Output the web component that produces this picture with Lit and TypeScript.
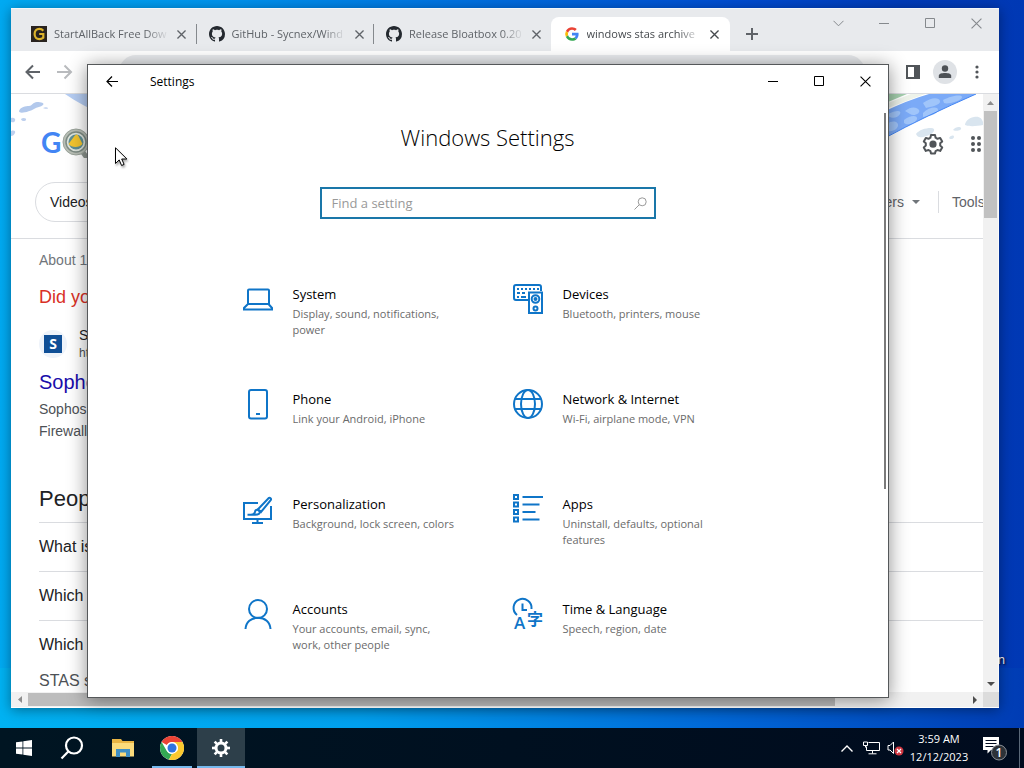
import { LitElement, html, css, svg } from "lit";
import { customElement, property } from "lit/decorators.js";
import { classMap } from "lit/directives/class-map.js";

const cross = (size = 10) => html`<svg width=${size} height=${size} viewBox="0 0 10 10" fill="none" stroke="currentColor"><path d="M0.5 0.5L9.5 9.5M9.5 0.5L0.5 9.5" /></svg>`;
const box = html`<svg width="11" height="11" viewBox="0 0 11 11" fill="none" stroke="currentColor"><path d="M.5 .5h9v9h-9z" /></svg>`;
const dash = html`<svg width="11" height="11" viewBox="0 0 11 11" fill="none" stroke="currentColor"><path d="M0 5.5h10" /></svg>`;

const githubMark = html`<svg width="16" height="16" viewBox="0 0 16 16" fill="#24292f"><path d="M8 0C3.58 0 0 3.58 0 8c0 3.54 2.29 6.53 5.47 7.59.4.07.55-.17.55-.38 0-.19-.01-.82-.01-1.49-2.01.37-2.53-.49-2.69-.94-.09-.23-.48-.94-.82-1.13-.28-.15-.68-.52-.01-.53.63-.01 1.08.58 1.23.82.72 1.21 1.87.87 2.33.66.07-.52.28-.87.51-1.07-1.78-.2-3.64-.89-3.64-3.95 0-.87.31-1.59.82-2.15-.08-.2-.36-1.02.08-2.12 0 0 .67-.21 2.2.82.64-.18 1.32-.27 2-.27s1.36.09 2 .27c1.53-1.04 2.2-.82 2.2-.82.44 1.1.16 1.92.08 2.12.51.56.82 1.27.82 2.15 0 3.07-1.87 3.75-3.65 3.95.29.25.54.73.54 1.48 0 1.07-.01 1.93-.01 2.2 0 .21.15.46.55.38A8.01 8.01 0 0 0 16 8c0-4.42-3.58-8-8-8z" /></svg>`;
const googleMark = html`<svg width="16" height="16" viewBox="0 0 48 48"><path fill="#ea4335" d="M24 11.5c3.3 0 6.200 1.200 8.500 3.300l5.700-5.700C34.500 5.700 29.700 3.500 24 3.500 16 3.500 9.100 8.100 5.700 14.800l6.700 5.200c1.600-4.900 6.200-8.500 11.600-8.500z" /><path fill="#4285f4" d="M43.800 24.500c0-1.400-.1-2.700-.4-4H24v7.800h11.100c-.5 2.600-2 4.700-4.100 6.100l6.500 5c3.900-3.600 6.300-8.900 6.300-14.900z" /><path fill="#fbbc05" d="M12.400 28.100a12.500 12.500 0 0 1 0-8.100l-6.700-5.200a20.500 20.500 0 0 0 0 18.500z" /><path fill="#34a853" d="M24 44.500c5.500 0 10.200-1.800 13.600-5l-6.500-5c-1.900 1.200-4.300 2-7.100 2-5.400 0-10-3.600-11.600-8.500l-6.700 5.200C9.100 39.900 16 44.500 24 44.500z" /></svg>`;
const startMark = html`<svg width="16" height="16" viewBox="0 0 16 16"><rect width="16" height="16" fill="#29231f" /><path d="M12.300 4.700C11.300 3.500 9.900 2.900 8.300 2.900 5.500 2.900 3.600 5.100 3.600 8s1.900 5.100 4.700 5.100c1.500 0 2.900-.5 4-1.500V8H8.200" fill="none" stroke="#dcb32c" stroke-width="2.200" /></svg>`;

interface TabInfo { title: string; icon: unknown; active?: boolean; rule?: boolean }
const TABS: TabInfo[] = [
  { title: "StartAllBack Free Dow", icon: startMark, rule: true },
  { title: "GitHub - Sycnex/Wind", icon: githubMark, rule: true },
  { title: "Release Bloatbox 0.20", icon: githubMark },
  { title: "windows stas archive", icon: googleMark, active: true },
];

@customElement("browser-window")
class BrowserWindow extends LitElement {
  static styles = css`
    :host { display: flex; flex-direction: column; background: #fff; box-sizing: border-box; overflow: hidden;
      box-shadow: 0 2px 12px rgba(0, 0, 0, .4); font-family: "Liberation Sans", Arial, sans-serif; color: #5f6368; }
    button { border: 0; background: none; padding: 0; margin: 0; color: inherit; font: inherit; display: grid; place-items: center; }
    svg { display: block; }
    a { text-decoration: none; color: inherit; }
    .strip { display: flex; background: #e8eaed; height: 43px; flex: none; padding-left: 7px; border-top: 1px solid #f4f6f8; box-sizing: border-box; }
    .tabs { display: flex; align-items: flex-end; flex: 0 1 712px; min-width: 0; }
    .tab { position: relative; display: flex; align-items: center; flex: 1 1 0; min-width: 0; height: 34px; box-sizing: border-box; padding: 0 6px 0 13px;
      font: 11px/16px "Open Sans", "Noto Sans", sans-serif; color: #5f6368; }
    .tab.active { background: #fff; border-radius: 8px 8px 0 0; color: #45494d; padding-right: 8px; }
    .tab.rule::after { content: ""; position: absolute; right: -1px; top: 7px; height: 20px; width: 1px; background: #85898d; }
    .name { flex: 1; min-width: 0; margin-left: 7px; overflow: hidden; white-space: nowrap;
      -webkit-mask-image: linear-gradient(90deg, #000 80%, transparent); mask-image: linear-gradient(90deg, #000 80%, transparent); }
    .tab button { width: 16px; height: 16px; margin-left: 5px; }
    .tab button svg { stroke-width: 1.5; }
    .add { align-self: flex-end; width: 44px; height: 34px; }
    .frame { display: flex; margin-left: auto; color: #85898d; }
    .frame button { width: 46px; height: 28px; }
    .bar { display: flex; align-items: center; height: 42px; flex: none; border-bottom: 1px solid #dadce0; padding: 0 11px 0 14px; }
    .bar button { flex: none; }
    .nav { width: 32px; height: 32px; justify-items: start; }
    .nav.off { color: #b9bbbe; }
    .omni { flex: 1; min-width: 0; height: 34px; margin: 0 36px 0 30px; border: 0; border-radius: 17px; background: #e9ebee; padding: 0 16px; box-sizing: border-box; }
    .bar .side { width: 24px; height: 24px; margin-right: 8px; }
    .bar .who { width: 24px; height: 24px; border-radius: 12px; background: #dfe2e6; margin-right: 9px; }
    .bar .more { width: 22px; height: 24px; }
    .view { flex: 1; min-height: 0; display: grid; grid-template: minmax(0, 1fr) 15px / minmax(0, 1fr) 16px; padding-bottom: 1px; }
    .page { position: relative; overflow: hidden; background: #fff; }
    .art { position: absolute; top: 0; }
    .art.l { left: 0; }
    .art.r { right: 0; }
    .top { position: relative; display: flex; align-items: center; height: 88px; padding: 0 0 0 30px; box-sizing: border-box; }
    .top .brand { display: flex; align-items: center; padding-top: 8px; color: #4285f4; font: 28px/32px "Lato", sans-serif; font-weight: 700; }
    .tools { display: flex; margin-left: auto; gap: 20px; padding-top: 12px; }
    .tools svg { width: 24px; height: 24px; }
    .clip { width: 18px; overflow: hidden; }
    .chips { position: relative; display: flex; align-items: center; height: 39px; font-size: 14px; padding-left: 24px; border-bottom: 1px solid #dadce0; padding-bottom: 17px; white-space: nowrap; }
    .chip { border: 1px solid #dadce0; border-radius: 20px; height: 38px; display: flex; align-items: center; padding: 0 15px 0 14px; color: #202124; }
    .filters { margin-left: auto; display: flex; align-items: center; gap: 8px; }
    .tool { border-left: 1px solid #dadce0; line-height: 22px; padding-left: 13px; margin-left: 10px; width: 31px; overflow: hidden; }
    .results { padding: 10px 0 0 28px; white-space: nowrap; font-size: 14px; line-height: 22px; color: #4d5156; }
    .stats { color: #70757a; }
    .didyou { margin: 14px 0 0; font-size: 18px; line-height: 24px; color: #d93025; }
    .site { display: flex; align-items: center; margin-top: 17px; }
    .fav { display: grid; place-items: center; width: 28px; height: 28px; border-radius: 14px; background: #eef3fa; margin-right: 12px; }
    .fav span { width: 18px; height: 18px; background: #0f4f96; color: #fff; font: bold 14px/18px "Open Sans", sans-serif; text-align: center; }
    .site p { margin: 0; color: #202124; line-height: 18px; }
    .site small { display: block; font-size: 12px; line-height: 18px; color: #4d5156; }
    .hit { display: block; margin: 7px 0 3px; font-size: 20px; line-height: 26px; color: #1a0dab; }
    .snip { margin: 0; }
    h2 { font-size: 22px; line-height: 28px; font-weight: 400; margin: 43px 0 9px; color: #202124; }
    .q { border-top: 1px solid #dadce0; line-height: 48px; font-size: 16px; color: #202124; }
    .ans { font-size: 16px; line-height: 24px; }
    .vs, .hs { background: #f1f1f1; display: flex; align-items: center; }
    .vs { flex-direction: column; color: #8d8d8d; border-right: 1px solid #fafafa; }
    .hs { color: #8d8d8d; }
    .vs .thumb { width: 13px; height: 107px; background: #c1c1c1; margin-bottom: auto; }
    .hs .thumb { height: 13px; flex: 0 1 807px; background: #bdbdbd; margin-right: auto; }
    .end { width: 17px; height: 17px; color: inherit; }
    .vs .end { width: 15px; }
    .end.dark { color: #4d4d4d; }
    .corner { background: #dcdcdc; }
  `;
  render() {
    return html`
      <div class="strip">
        <div class="tabs" role="tablist">
          ${TABS.map((t) => html`<div class=${classMap({ tab: true, active: !!t.active, rule: !!t.rule })} role="tab" aria-selected=${t.active ? "true" : "false"}>
            ${t.icon}<span class="name">${t.title}</span><button aria-label="Close tab">${cross(9)}</button>
          </div>`)}
        </div>
        <button class="add" aria-label="New tab"><svg width="12" height="12" viewBox="0 0 12 12" stroke="currentColor" stroke-width="2"><path d="M6 0v12M0 6h12" /></svg></button>
        <div class="frame">
          <button aria-label="Search tabs"><svg width="11" height="7" viewBox="0 0 11 7" fill="none" stroke="currentColor"><path d="M.5 .8L5.500 5.800L10.500 .8" /></svg></button>
          <button aria-label="Minimize">${dash}</button>
          <button aria-label="Maximize">${box}</button>
          <button aria-label="Close">${cross(11)}</button>
        </div>
      </div>
      <div class="bar">
        <button class="nav" aria-label="Back"><svg width="16" height="16" viewBox="0 0 16 16" fill="none" stroke="currentColor" stroke-width="2"><path d="M15 8H2M8 1.500L1.500 8l6.500 6.500" /></svg></button>
        <button class="nav off" aria-label="Forward"><svg width="16" height="16" viewBox="0 0 16 16" fill="none" stroke="currentColor" stroke-width="2"><path d="M0 8H13M7.500 1.500L14 8l-6.500 6.500" /></svg></button>
        <input class="omni" type="text" aria-label="Address" />
        <button class="side" aria-label="Side panel"><svg width="14" height="14" viewBox="0 0 14 14"><path fill="#515559" fill-rule="evenodd" d="M0 0h14v14H0zM2 2v10h6V2z" /></svg></button>
        <button class="who" aria-label="Profile"><svg width="14" height="14" viewBox="0 0 14 14" fill="#4d5156"><circle cx="7" cy="3.500" r="3.200" /><path d="M.8 13v-2.300C.8 8.700 4 8 7 8s6.200.7 6.200 2.700V13z" /></svg></button>
        <button class="more" aria-label="More"><svg width="4" height="14" viewBox="0 0 4 14" fill="#515559"><circle cx="2" cy="2" r="1.600" /><circle cx="2" cy="7" r="1.600" /><circle cx="2" cy="12" r="1.600" /></svg></button>
      </div>
      <div class="view">
        <div class="page">
          <svg class="art l" width="90" height="60" viewBox="0 0 90 60"><path d="M54 0h36v20C77 14 66 8 54 0z" fill="#b5cdf3" /><path d="M8 17c1-4 7-5 10-5s4-4 8-4 8 1 6 3-6 2-9 4-15 6-15 2z" fill="#b3c9ec" /><path d="M0 24c3-1 5 1 4 3s-3 1-4 1zM10 25c2-2 6-1 5 1s-5 1-5-1zM0 37c3-1 5 0 4 2s-2 3-4 3zM32 14c2-1 4-1 5 0s-4 1-5 0z" fill="#bed0ee" /></svg>
          <svg class="art r" width="100" height="60" viewBox="0 0 100 60"><path d="M0 0h24L5 8H0z" fill="#a5d0ae" /><path d="M0 11L28 0h14L5 14 0 16z" fill="#eef3ea" /><path d="M0 18Q25 6 46 0h47Q70 10 45 22T0 45z" fill="#7baaf7" /><path d="M5 20c8-4 14-4 12 0s-8 5-12 2zM22 17c6-5 12-4 14-1s-5 7-9 4zM40 9c8-6 16-6 17-2s-10 6-14 7zM60 6c8-4 18-6 19-3s-14 8-18 6zM4 30c6-5 12-2 11 2s-8 7-11 4zM21 26c6-5 14-5 13-1s-9 7-13 4zM40 19c6-6 15-7 15-3s-8 6-15 7z" fill="#a0c5fa" /><path d="M0 45Q22 33 45 22T93 0" fill="none" stroke="#4285f4" /><path d="M33 40c3-4 9-6 15-6s3 6-4 8-9 2-11-2zM66 44c2-3 5-3 5-1s-4 3-5 1zM70 36c2-3 7-4 8-2s-4 4-8 2zM82 31c0-3 3-7 9-8s8 2 9 5v3c-6 1-13 2-18 0z" fill="#d9e5ef" /></svg>
          <div class="top">
            <a class="brand" href="#" aria-label="Google">G<svg width="32" height="32" viewBox="0 0 32 32"><path d="M21 25l5 7" stroke="#8e9690" stroke-width="5" /><circle cx="15" cy="16" r="13" fill="#b9bfb6" stroke="#9aa39a" /><circle cx="15" cy="16" r="10" fill="#dfe5de" stroke="#7e8c84" stroke-width="1.500" /><circle cx="15" cy="16" r="7.500" fill="#5e8f95" /><path d="M7.500 18l6-8c2-2 3-2 4 0l4 8c-3 4-11 4-14 0z" fill="#f3c52f" /></svg></a>
            <div class="tools">
              <button aria-label="Quick settings"><svg viewBox="0 0 24 24" fill="none" stroke="#515559" stroke-width="2"><path d="M10 3h4l.6 2.700 1.900 1.100 2.700-.9 2 3.500-2 1.900v2.200l2 1.900-2 3.500-2.700-.9-1.900 1.100L14 21.500h-4l-.6-2.400-1.900-1.100-2.700.9-2-3.500 2-1.900v-2.200l-2-1.900 2-3.500 2.700.9 1.900-1.100z" stroke-linejoin="round" /><circle cx="12" cy="12.200" r="2.600" fill="#515559" /></svg></button>
              <button class="clip" aria-label="Google apps"><svg viewBox="0 0 24 24" fill="#515559">${[6, 12, 18].map((y) => [8, 14, 20].map((x) => svg`<circle cx=${x} cy=${y} r="2" />`))}</svg></button>
            </div>
          </div>
          <nav class="chips">
            <a class="chip" href="#">Videos</a>
            <div class="filters"><a href="#">All filters</a><svg width="8" height="4" viewBox="0 0 8 4"><path d="M0 0h8L4 4z" fill="#70757a" /></svg><a class="tool" href="#">Tools</a></div>
          </nav>
          <div class="results">
            <div class="stats">About 1,230 results</div>
            <p class="didyou">Did you mean:</p>
            <div class="site"><span class="fav"><span>S</span></span><div><p>Sophos</p><small>https://docs</small></div></div>
            <a class="hit" href="#">Sophos</a>
            <p class="snip">Sophos Transparent</p>
            <p class="snip">Firewall</p>
            <h2>People also ask</h2>
            <div class="q">What is STAS</div>
            <div class="q">Which port</div>
            <div class="q">Which</div>
            <div class="ans">STAS suite</div>
          </div>
        </div>
        <div class="vs"><button class="end" aria-label="Scroll up"><svg width="7" height="4" viewBox="0 0 7 4"><path d="M0 4h7L3.500 0z" fill="currentColor" /></svg></button><div class="thumb"></div><button class="end dark" aria-label="Scroll down"><svg width="8" height="4" viewBox="0 0 8 4"><path d="M0 0h8L4 4z" fill="currentColor" /></svg></button></div>
        <div class="hs"><button class="end" aria-label="Scroll left"><svg width="4" height="7" viewBox="0 0 4 7"><path d="M4 0v7L0 3.500z" fill="currentColor" /></svg></button><div class="thumb"></div><button class="end dark" aria-label="Scroll right"><svg width="4" height="8" viewBox="0 0 4 8"><path d="M0 0v8L4 4z" fill="currentColor" /></svg></button></div>
        <div class="corner"></div>
      </div>`;
  }
}

const ICONS: Record<string, unknown> = {
  system: svg`<path d="M5 6.500a1 1 0 0 1 1-1h19a1 1 0 0 1 1 1V20H5zM5 20l-4 4v1.500h28V24l-3.500-4" />`,
  phone: svg`<rect x="6" y="1" width="18" height="28.500" rx="2" /><path d="M13 25h4" />`,
  devices: svg`<path d="M15 16H3a2 2 0 0 1-2-2V3a2 2 0 0 1 2-2h23a2 2 0 0 1 2 2v4" /><path d="M4 5h2M8 5h2M12 5h2M16 5h2M20 5h2M24 5h2M4 9h3M9 9h3M4 13h2M8 13h5" stroke-width="1.800" /><rect x="16" y="8.500" width="13" height="20.500" /><circle cx="22.500" cy="15" r="3.800" /><circle cx="22.500" cy="15" r="1" /><circle cx="22.500" cy="24.500" r="2" />`,
  network: svg`<circle cx="15" cy="15" r="14" /><ellipse cx="15" cy="15" rx="7" ry="14" /><path d="M2 10h26M2 20h26" />`,
  personalization: svg`<path d="M15 9H1v16h27V12" /><path d="M14.500 25v4M9 29h11" /><path d="M25.500 4.200c1.500-1 3.200.5 2.200 2L18 18l-3-2.800zM14.500 15.500l3 2.800" /><path d="M15 15.500c-2 0-3 1-3.200 3-.2 1.300-1 2-3.800 2.200H4.500h7.500c3.500 0 5-1 5-3.200" />`,
  apps: svg`<path d="M9.500 3h20.500M9.500 10.500h17M9.500 18h13M9.500 25.500h17" /><path d="M1 1h4v4H1zM1 8.500h4v4H1zM1 16h4v4H1zM1 23.500h4v4H1z" />`,
  accounts: svg`<circle cx="15" cy="10" r="9" /><path d="M2.500 30C3 23 8 18.800 15 18.800S27 23 27.500 30" />`,
  time: svg`<path d="M4 16A9 9 0 1 1 18.500 10" /><path d="M9.500 4.500V11H14" /><g fill="#0f75c8" stroke="none" font-weight="700"><text x="1" y="29.500" font-size="17" font-weight="600" font-family="Open Sans, sans-serif">A</text><text x="14" y="26" font-size="16" font-family="Noto Sans CJK JP, sans-serif">字</text></g>`,
};

@customElement("setting-tile")
class SettingTile extends LitElement {
  @property() icon = "";
  @property() name = "";
  @property() detail = "";
  static styles = css`
    :host { display: block; }
    .tile { display: flex; align-items: flex-start; gap: 20px; width: 100%; min-height: 80px; padding: 13px 32px 0 25px; box-sizing: border-box; text-decoration: none; }
    svg { flex: none; display: block; width: 30px; height: 30px; overflow: visible; }
    .name { display: block; font-size: 13px; line-height: 20px; color: #000; }
    .detail { display: block; margin-top: 2px; font-size: 11px; line-height: 16px; color: #6b6b6b; }
  `;
  render() {
    return html`<a class="tile" href="#">
      <svg viewBox="0 0 30 30" fill="none" stroke="#0f75c8" stroke-width="2">${ICONS[this.icon]}</svg>
      <span><span class="name">${this.name}</span><span class="detail">${this.detail}</span></span>
    </a>`;
  }
}

const SETTINGS = [
  ["system", "System", "Display, sound, notifications, power"],
  ["devices", "Devices", "Bluetooth, printers, mouse"],
  ["phone", "Phone", "Link your Android, iPhone"],
  ["network", "Network & Internet", "Wi-Fi, airplane mode, VPN"],
  ["personalization", "Personalization", "Background, lock screen, colors"],
  ["apps", "Apps", "Uninstall, defaults, optional features"],
  ["accounts", "Accounts", "Your accounts, email, sync, work, other people"],
  ["time", "Time & Language", "Speech, region, date"],
];

@customElement("settings-window")
class SettingsWindow extends LitElement {
  static styles = css`
    :host { display: flex; flex-direction: column; box-sizing: border-box; background: #fff; border: 1px solid #55585a; color: #000;
      box-shadow: 0 2px 18px rgba(0, 0, 0, .45); font-family: "Open Sans", "Noto Sans", sans-serif; overflow: hidden; }
    button { border: 0; background: none; padding: 0; display: grid; place-items: center; color: #000; }
    svg { display: block; }
    .bar { display: flex; height: 32px; flex: none; align-items: center; font-size: 12px; }
    .back { width: 48px; height: 32px; }
    .bar span { margin-left: 14px; flex: 1; }
    .bar .ctl { width: 46px; height: 32px; }
    .body { flex: 1; min-height: 0; display: flex; padding-top: 16px; }
    .main { flex: 1; min-width: 0; overflow: hidden; display: flex; flex-direction: column; align-items: center; padding-top: 8px; margin-right: -3px; }
    .rail { width: 2px; height: 376px; background: #7a7a7a; margin-right: 2px; z-index: 1; }
    h1 { margin: 0; font-size: 22px; font-weight: 300; line-height: 32px; }
    .find { display: flex; align-items: center; width: 336px; height: 32px; margin-top: 34px; border: 2px solid #1a77a9; box-sizing: border-box; padding-right: 7px; }
    .find input { flex: 1; min-width: 0; border: 0; outline: 0; background: none; padding: 0 10px; font: 13px/20px "Open Sans", sans-serif; }
    .find input::placeholder { color: #999; opacity: 1; }
    .grid { display: grid; grid-template-columns: 270px 270px; row-gap: 25px; margin-top: 52px; }
  `;
  render() {
    return html`
      <div class="bar">
        <button class="back" aria-label="Back"><svg width="13" height="11" viewBox="0 0 13 11" fill="none" stroke="currentColor" stroke-width="1.200"><path d="M12 5.500H1M6 .5L1 5.500l5 5" /></svg></button>
        <span>Settings</span>
        <button class="ctl" aria-label="Minimize">${dash}</button><button class="ctl" aria-label="Maximize">${box}</button><button class="ctl" aria-label="Close">${cross(11)}</button>
      </div>
      <div class="body">
        <div class="main">
          <h1>Windows Settings</h1>
          <div class="find"><input type="text" aria-label="Find a setting" placeholder="Find a setting" />
            <svg width="13" height="13" viewBox="0 0 13 13" fill="none" stroke="#999"><circle cx="8.200" cy="4.800" r="4" /><path d="M5.300 7.700L.5 12.500" /></svg></div>
          <div class="grid">${SETTINGS.map(([icon, name, detail]) => html`<setting-tile .icon=${icon} .name=${name} .detail=${detail}></setting-tile>`)}</div>
        </div>
        <div class="rail"></div>
      </div>`;
  }
}

@customElement("task-bar")
class TaskBar extends LitElement {
  static styles = css`
    :host { display: flex; height: 40px; background: linear-gradient(90deg, #001522, #001020 50%, #000b1e); color: #fff; font: 11px/18px "Open Sans", "Noto Sans", sans-serif; }
    button { border: 0; background: none; padding: 0; color: inherit; font: inherit; display: grid; place-items: center; }
    svg { display: block; }
    .apps { display: flex; gap: 3px; }
    .system, .pins { display: flex; }
    .pins { gap: 1px; }
    .app { width: 48px; height: 40px; box-sizing: border-box; }
    .open { background: linear-gradient(#76b9ed, #76b9ed) center bottom / 40px 2px no-repeat; }
    .on { background: linear-gradient(#76b9ed, #76b9ed) center bottom / 48px 2px no-repeat #2d3f4a; }
    .tray { margin-left: auto; display: flex; align-items: center; }
    .tray button { height: 40px; width: 24px; }
    .tray .clock { display: block; width: 60px; text-align: center; white-space: nowrap; margin: 0 2px; }
    .tray .note { width: 48px; }
    .tray .peek { width: 5px; border-left: 1px solid #5b6878; }
  `;
  render() {
    const teeth = [0, 45, 90, 135, 180, 225, 270, 315];
    return html`
      <div class="apps">
        <div class="system">
          <button class="app" aria-label="Start"><svg width="16" height="16" viewBox="0 0 16 16" fill="#fff"><path d="M0 2.300L6.500 1.400v6.200H0zM7.300 1.300L16 0v7.600H7.300zM0 8.400h6.500v6.200L0 13.700zM7.300 8.400H16V16l-8.700-1.300z" /></svg></button>
          <button class="app" aria-label="Search"><svg width="24" height="24" viewBox="0 0 24 24" fill="none" stroke="#fff" stroke-width="2.200"><circle cx="14" cy="9.500" r="8" /><path d="M8.300 15.500L1.500 22.500" /></svg></button>
        </div>
        <div class="pins">
          <button class="app" aria-label="File Explorer"><svg width="22" height="20" viewBox="0 0 22 20"><path d="M0 1h9l1.500 2H22v15H0z" fill="#e9b544" /><path d="M0 5h22v13.500H0z" fill="#fbdb7b" /><path d="M4 11h14v8h-4v-4.500H8V19H4z" fill="#3f8fc4" /></svg></button>
          <button class="app open" aria-label="Google Chrome"><svg width="24" height="24" viewBox="0 0 24 24"><circle cx="12" cy="12" r="12" fill="#fff" /><path d="M1.600 6A12 12 0 0 1 22.400 6H12a6 6 0 0 0-5.200 3z" fill="#ea4335" /><path d="M1.600 6l5.200 9A6 6 0 0 0 12 18l-3 5.600A12 12 0 0 1 1.600 6z" fill="#34a853" /><path d="M22.400 6A12 12 0 0 1 9 23.600L12 18l5.200-3A6 6 0 0 0 15 6.800 8 8 0 0 0 12 6z" fill="#fbc92f" /><circle cx="12" cy="12" r="5.800" fill="#fff" /><circle cx="12" cy="12" r="4.500" fill="#2f74e0" /></svg></button>
          <button class="app on" aria-label="Settings"><svg width="18" height="18" viewBox="0 0 18 18"><circle cx="9" cy="9" r="5" fill="none" stroke="#fff" stroke-width="3" />${teeth.map((a) => svg`<path d="M7.700 0h2.600v3.500h-2.600z" fill="#fff" transform="rotate(${a} 9 9)" />`)}</svg></button>
        </div>
      </div>
      <div class="tray">
        <button aria-label="Show hidden icons"><svg width="12" height="7" viewBox="0 0 12 7" fill="none" stroke="#fff" stroke-width="1.400"><path d="M.5 6.500L6 1l5.500 5.500" /></svg></button>
        <button aria-label="Network"><svg width="17" height="14" viewBox="0 0 17 14" fill="none" stroke="#fff"><path d="M5.500 1.500h11v8h-13v-4" /><path d="M.5 1h4v3.500h-4zM2.500 4.500v2M9.500 9.500v3M5.500 12.800h8" /></svg></button>
        <button aria-label="Volume"><svg width="17" height="15" viewBox="0 0 17 15"><path d="M1 4.500h2L6.500 1v11.500L3 9H1z" fill="none" stroke="#fff" /><circle cx="12" cy="10" r="4.500" fill="#cf3640" /><path d="M10 8l4 4M14 8l-4 4" stroke="#fff" stroke-width="1.200" /></svg></button>
        <button class="clock">3:59 AM<br />12/12/2023</button>
        <button class="note" aria-label="Notifications"><svg width="26" height="26" viewBox="0 0 26 26"><path d="M1 2h16v13H9l-3.500 3.500V15H1z" fill="#fff" /><path d="M3.500 5.500h11M3.500 8.500h11M3.500 11.500h8" stroke="#000b1e" /><circle cx="17" cy="17.500" r="7.500" fill="#2d3238" stroke="#8a8f96" /><text x="17" y="22" text-anchor="middle" fill="#fff" font-size="12" font-family="Open Sans, sans-serif" font-weight="600">1</text></svg></button>
        <button class="peek" aria-label="Show desktop"></button>
      </div>`;
  }
}

@customElement("app-root")
class AppRoot extends LitElement {
  static styles = css`
    :host { display: flex; flex-direction: column; height: 100vh; overflow: hidden; }
    .desk { flex: 1; position: relative; overflow: hidden; background: linear-gradient(90deg, #00aaf2 0, #0094ee 22%, #0070e0 46%, #004cd0 72%, #003cb9 88%, #0038b4 100%); }
    .desk::before { content: ""; position: absolute; inset: auto 0 0; height: 60px; background: linear-gradient(90deg, #00b2f2, #00a0ee 35%, #0068d8 70%, #003cb4); }
    .label { position: absolute; right: 19px; bottom: 60px; font: 12px/16px "Open Sans", sans-serif; color: #fff; text-shadow: 1px 1px 2px #000; }
    browser-window { position: absolute; inset: 8px 25px 20px 11px; }
    settings-window { position: absolute; inset: 64px 135px 30px 87px; }
    .pointer { position: absolute; left: 115px; top: 147px; filter: drop-shadow(1px 2px 1px rgba(0, 0, 0, .35)); }
  `;
  render() {
    return html`
      <div class="desk">
        <span class="label">Recycle Bin</span>
        <browser-window></browser-window>
        <settings-window></settings-window>
        <svg class="pointer" width="13" height="20" viewBox="0 0 13 20"><path d="M.5 .8v15.700l3.700-3.600 2.400 5.600 2.500-1.100-2.400-5.400h5.200z" fill="#fff" stroke="#000" /></svg>
      </div>
      <task-bar></task-bar>`;
  }
}
